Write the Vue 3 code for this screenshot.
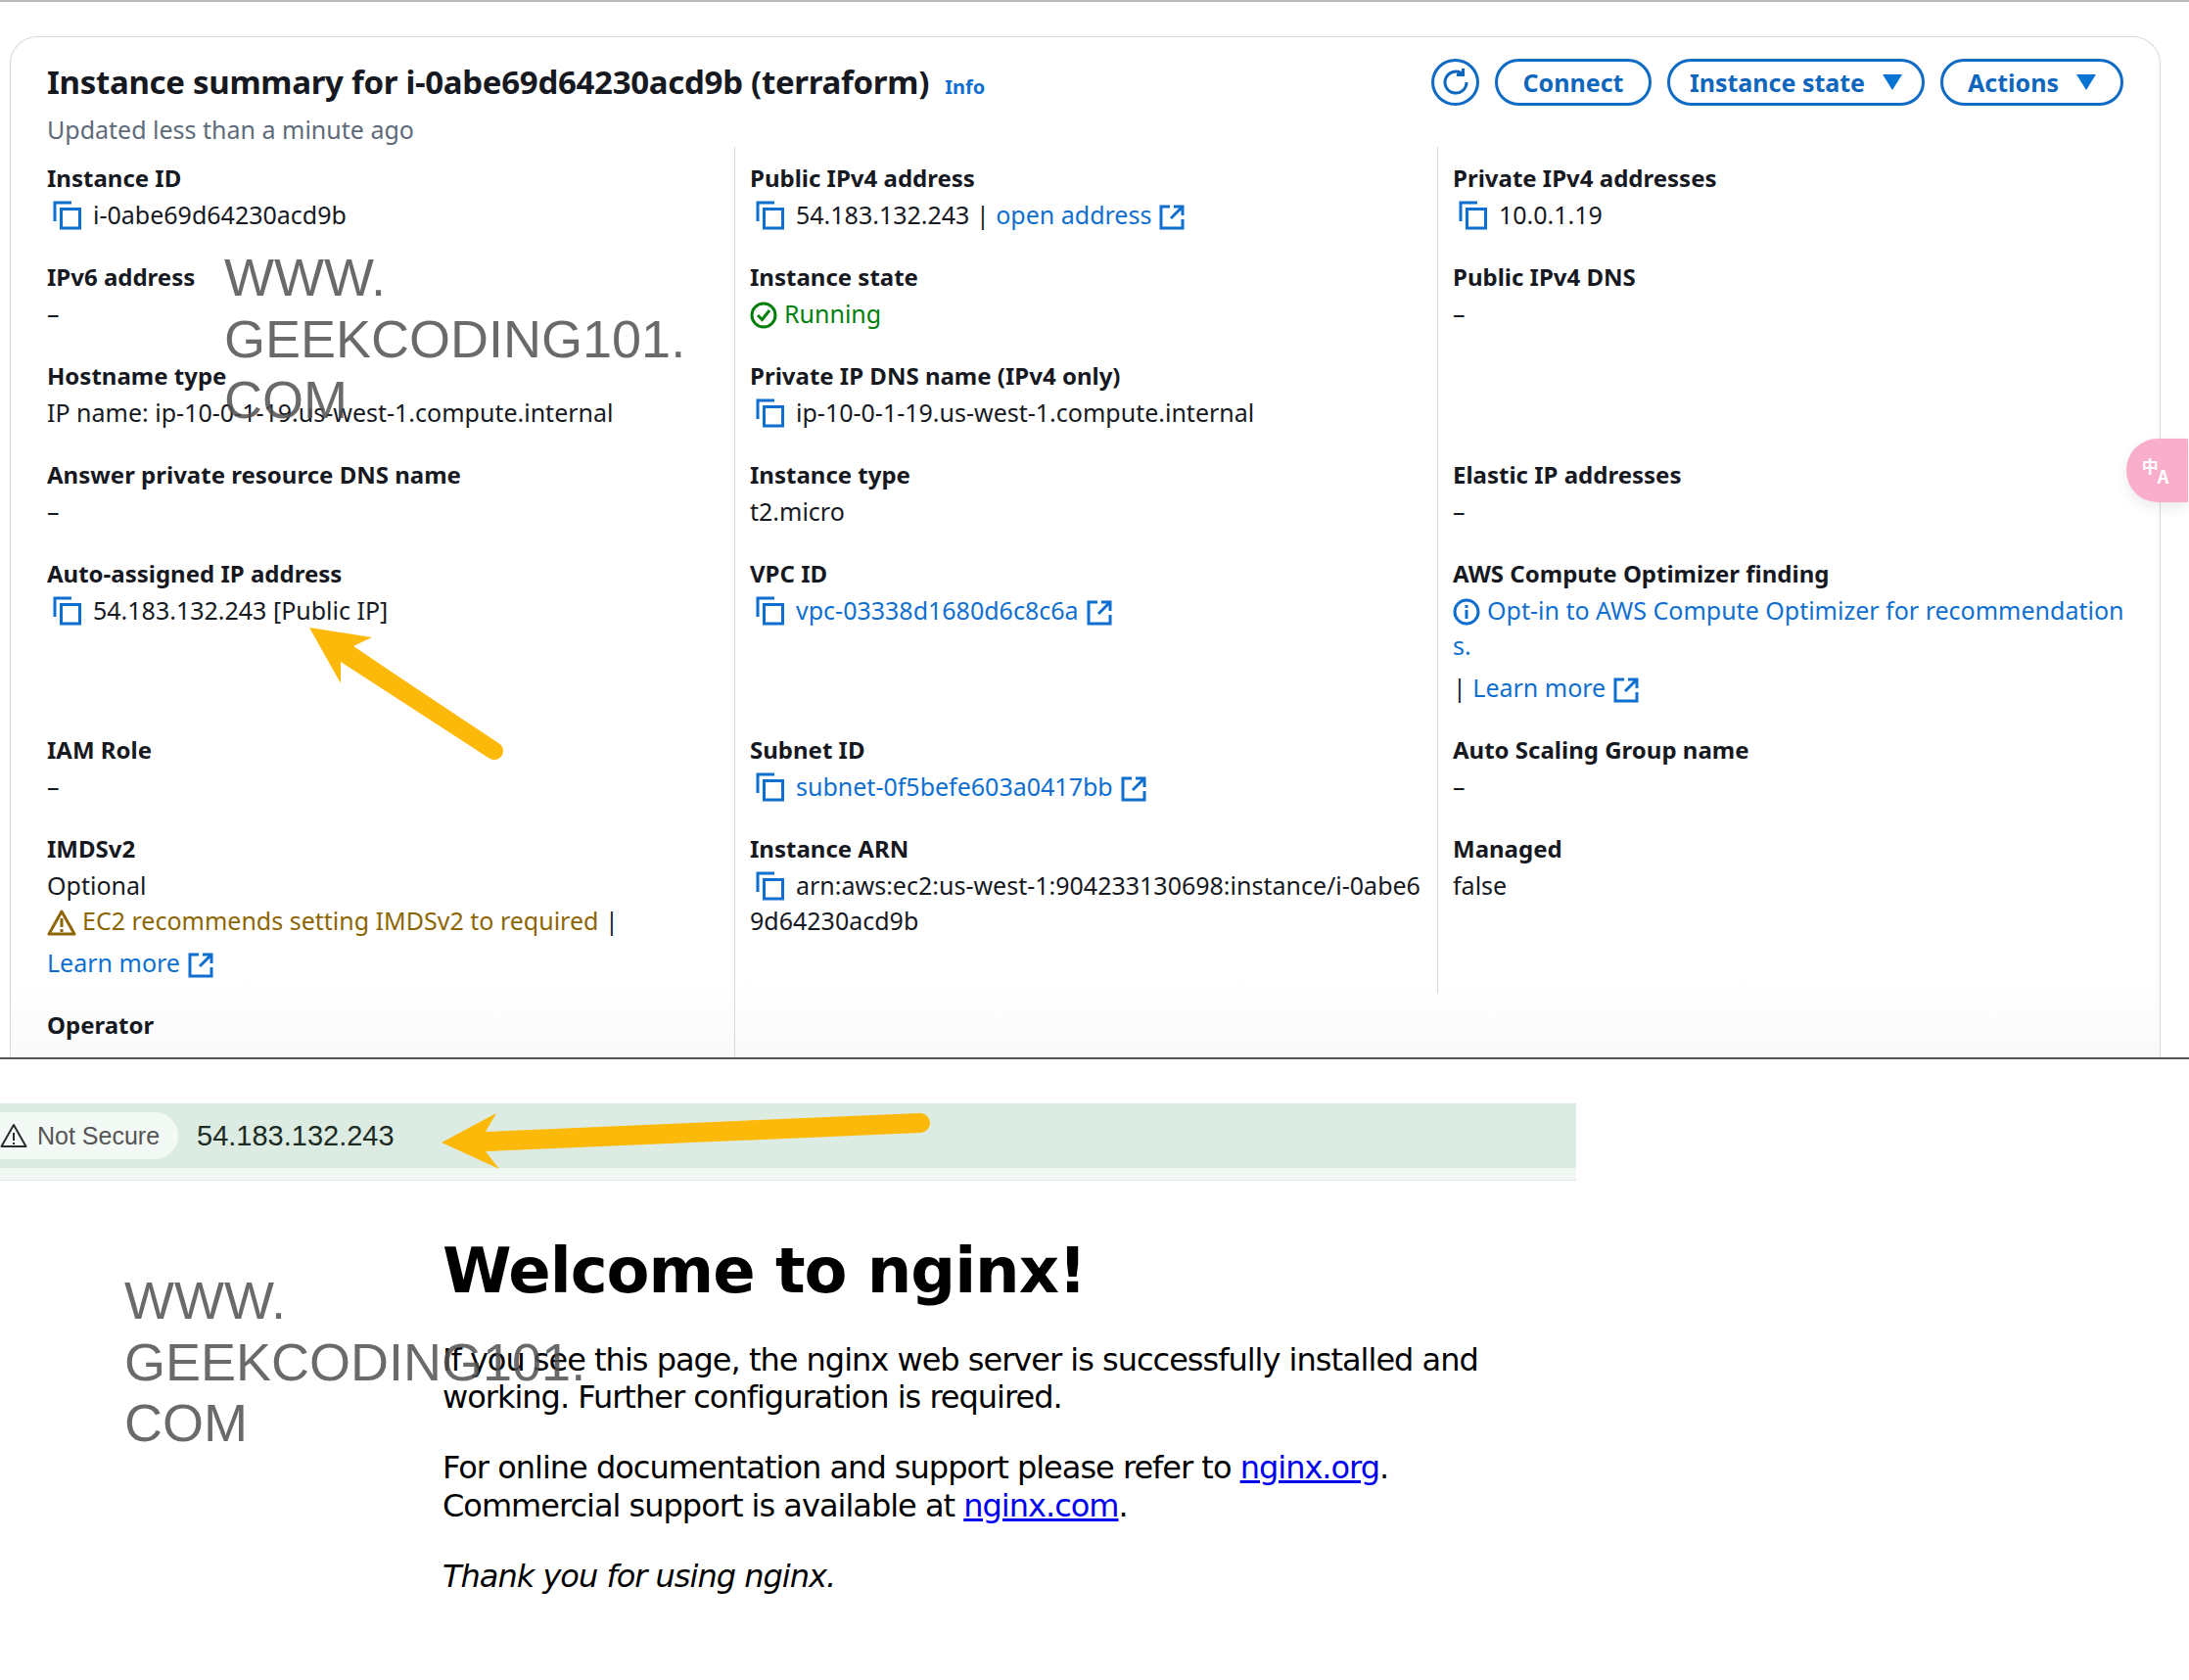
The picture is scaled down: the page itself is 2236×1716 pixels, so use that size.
<template>
  <div class="page">
    <div class="top-line"></div>

    <section class="card">
      <header class="head">
        <div>
          <h1 class="title">Instance summary for i-0abe69d64230acd9b (terraform) <a class="info">Info</a></h1>
          <p class="updated">Updated less than a minute ago</p>
        </div>
        <div class="actions">
          <button class="btn round" aria-label="Refresh">
            <svg width="30" height="30" viewBox="0 0 30 30" fill="none" stroke="currentColor" stroke-width="3">
              <path d="M21.5 6.2A11 11 0 1 0 26 15" />
              <path d="M22.5 1v6.5H16" />
            </svg>
          </button>
          <button class="btn connect">Connect</button>
          <button class="btn state">Instance state <i class="caret"></i></button>
          <button class="btn acts">Actions <i class="caret"></i></button>
        </div>
      </header>

      <div class="grid">
        <div v-for="(cell, i) in cells" :key="i" class="cell" :class="{ first: i % 3 === 0 }">
          <template v-if="cell">
            <div class="label">{{ cell.label }}</div>
            <div v-for="(line, j) in cell.lines" :key="j" class="line" :class="line.cls">
              <template v-for="(seg, k) in line.segs" :key="k">
                <svg v-if="seg.icon === 'copy'" class="ico copy" width="30" height="30" viewBox="0 0 30 30" fill="none" stroke="#0f6fd0" stroke-width="3">
                  <path d="M2 21V2h17" />
                  <rect x="8.5" y="8.5" width="19" height="19.5" />
                </svg>
                <svg v-else-if="seg.icon === 'ext'" class="ico ext" width="26" height="26" viewBox="0 0 26 26" fill="none" stroke="#0f6fd0" stroke-width="3">
                  <path d="M11 2H2v22h22v-9" />
                  <path d="M24 11V2h-9M24 2L12 14" />
                </svg>
                <svg v-else-if="seg.icon === 'ok'" class="ico ok" width="28" height="28" viewBox="0 0 28 28" fill="none" stroke="#037f0c" stroke-width="3">
                  <circle cx="14" cy="14" r="12" />
                  <path d="M8 14l4.500 4.500L20 9" />
                </svg>
                <svg v-else-if="seg.icon === 'warn'" class="ico warn" width="30" height="28" viewBox="0 0 30 28" fill="none" stroke="#8d6605" stroke-width="3">
                  <path d="M15 3L2 26h26z" stroke-linejoin="round" />
                  <path d="M15 10v9M15 21v3" />
                </svg>
                <svg v-else-if="seg.icon === 'info'" class="ico inf" width="28" height="28" viewBox="0 0 28 28" fill="none" stroke="#0f6fd0" stroke-width="3">
                  <circle cx="14" cy="14" r="12" />
                  <path d="M14 12v9M14 7v3" />
                </svg>
                <a v-else-if="seg.link" class="link">{{ seg.text }}</a>
                <span v-else :class="seg.cls">{{ seg.text }}</span>
              </template>
            </div>
          </template>
        </div>
      </div>

      <div class="pink">
        <span class="zh">中</span><span class="en">A</span>
      </div>
    </section>

    <section class="browser">
      <div class="bar">
        <div class="pill">
          <svg width="28" height="28" viewBox="0 0 28 28" fill="none" stroke="#2b2b2b" stroke-width="2">
            <path d="M14 3L1.500 25h25z" stroke-linejoin="round" />
            <path d="M14 11v8M14 21v2" />
          </svg>
          <span>Not Secure</span>
        </div>
        <span class="addr">54.183.132.243</span>
      </div>
      <div class="bar-foot"></div>

      <div class="nginx">
        <h2>Welcome to nginx!</h2>
        <p>If you see this page, the nginx web server is successfully installed and<br />working. Further configuration is required.</p>
        <p>For online documentation and support please refer to <a>nginx.org</a>.<br />Commercial support is available at <a>nginx.com</a>.</p>
        <p><em>Thank you for using nginx.</em></p>
      </div>
    </section>

    <div class="mark mark-a">WWW.<br />GEEKCODING101.<br />COM</div>
    <div class="mark mark-b">WWW.<br />GEEKCODING101.<br />COM</div>

    <svg class="arrow arrow-a" width="240" height="160" viewBox="0 0 240 160">
      <polygon points="6,1 70,11 51,20 201,122 189,134 38,36 38,58" fill="#fdb90a" />
      <line x1="40" y1="24" x2="195" y2="127" stroke="#fdb90a" stroke-width="18" stroke-linecap="round" />
    </svg>
    <svg class="arrow arrow-b" width="520" height="70" viewBox="0 0 520 70">
      <polygon points="1,37 57,7 46,26 46,46 60,64" fill="#fdb90a" />
      <line x1="46" y1="36" x2="490" y2="17" stroke="#fdb90a" stroke-width="20" stroke-linecap="round" />
    </svg>
  </div>
</template>

<script setup>
const txt = (text, cls) => ({ text, cls })
const link = (text) => ({ text, link: true })
const copy = { icon: 'copy' }
const ext = { icon: 'ext' }
const dash = { segs: [txt('–')] }

// cells run left to right, three per row; null leaves a column empty
const cells = [
  { label: 'Instance ID', lines: [{ segs: [copy, txt('i-0abe69d64230acd9b')] }] },
  { label: 'Public IPv4 address', lines: [{ segs: [copy, txt('54.183.132.243 | '), link('open address'), ext] }] },
  { label: 'Private IPv4 addresses', lines: [{ segs: [copy, txt('10.0.1.19')] }] },

  { label: 'IPv6 address', lines: [dash] },
  { label: 'Instance state', lines: [{ segs: [{ icon: 'ok' }, txt('Running', 'green')] }] },
  { label: 'Public IPv4 DNS', lines: [dash] },

  { label: 'Hostname type', lines: [{ segs: [txt('IP name: ip-10-0-1-19.us-west-1.compute.internal')] }] },
  { label: 'Private IP DNS name (IPv4 only)', lines: [{ segs: [copy, txt('ip-10-0-1-19.us-west-1.compute.internal')] }] },
  {},

  { label: 'Answer private resource DNS name', lines: [dash] },
  { label: 'Instance type', lines: [{ segs: [txt('t2.micro')] }] },
  { label: 'Elastic IP addresses', lines: [dash] },

  { label: 'Auto-assigned IP address', lines: [{ segs: [copy, txt('54.183.132.243 [Public IP]')] }] },
  { label: 'VPC ID', lines: [{ segs: [copy, link('vpc-03338d1680d6c8c6a'), ext] }] },
  {
    label: 'AWS Compute Optimizer finding',
    lines: [
      { segs: [{ icon: 'info' }, link('Opt-in to AWS Compute Optimizer for recommendation')] },
      { segs: [link('s.')] },
      { segs: [txt('| '), link('Learn more'), ext], cls: 'spaced' },
    ],
  },

  { label: 'IAM Role', lines: [dash] },
  { label: 'Subnet ID', lines: [{ segs: [copy, link('subnet-0f5befe603a0417bb'), ext] }] },
  { label: 'Auto Scaling Group name', lines: [dash] },

  {
    label: 'IMDSv2',
    lines: [
      { segs: [txt('Optional')] },
      { segs: [{ icon: 'warn' }, txt('EC2 recommends setting IMDSv2 to required', 'amber'), txt(' |')] },
      { segs: [link('Learn more'), ext], cls: 'spaced' },
    ],
  },
  {
    label: 'Instance ARN',
    lines: [
      { segs: [copy, txt('arn:aws:ec2:us-west-1:904233130698:instance/i-0abe6')] },
      { segs: [txt('9d64230acd9b')] },
    ],
  },
  { label: 'Managed', lines: [{ segs: [txt('false')] }] },

  { label: 'Operator', lines: [] },
  {},
]
</script>

<style>
html,
body {
  margin: 0;
  background: #fff;
}
</style>

<style scoped>
.page {
  position: relative;
  width: 2236px;
  height: 1716px;
  overflow: hidden;
  font-family: "Noto Sans", "Open Sans", sans-serif;
  color: #16191f;
}

.top-line {
  height: 2px;
  background: #bbb;
}

.card {
  position: relative;
  height: 1043px;
  margin: 35px 29px 0 10px;
  border: 1px solid #d5d9de;
  border-bottom: 0;
  border-radius: 28px 28px 0 0;
  padding: 0 0 0 37px;
  box-sizing: border-box;
  background: linear-gradient(#fff 960px, #fafafa);
}

.head {
  display: flex;
  justify-content: space-between;
  align-items: flex-start;
  padding: 22px 37px 0 0;
  height: 112px;
  box-sizing: border-box;
}

.title {
  margin: 0;
  font-size: 33px;
  line-height: 48px;
  font-weight: 700;
  letter-spacing: -0.3px;
}

.info {
  margin-left: 8px;
  font-size: 20px;
  font-weight: 700;
  letter-spacing: 0;
  color: #0f6fd0;
}

.updated {
  margin: 0;
  font-size: 25px;
  line-height: 38px;
  color: #5f6b7a;
}

.actions {
  display: flex;
  gap: 16px;
  align-items: center;
}

.btn {
  height: 48px;
  box-sizing: border-box;
  border: 3px solid #0f6bc4;
  border-radius: 24px;
  background: #fff;
  color: #0f66bd;
  font: 700 25px "Noto Sans", sans-serif;
  padding: 0;
  display: flex;
  align-items: center;
  justify-content: center;
}

.round {
  width: 49px;
  border-radius: 50%;
}

.connect {
  width: 160px;
}

.state {
  width: 263px;
  gap: 18px;
}

.acts {
  width: 187px;
  gap: 18px;
}

.caret {
  width: 0;
  height: 0;
  border-left: 10px solid transparent;
  border-right: 10px solid transparent;
  border-top: 16px solid #0972d3;
}

.grid {
  display: grid;
  grid-template-columns: 702px 718px 680px;
  margin-top: 0;
}

.cell {
  padding: 14px 0 14px 15px;
  border-left: 1px solid #d5d9de;
  min-width: 0;
}

.cell.first {
  padding-left: 0;
  border-left: 0;
}

.label {
  font-size: 24px;
  line-height: 36.5px;
  font-weight: 700;
  white-space: nowrap;
}

.line {
  font-size: 25px;
  line-height: 36.5px;
  white-space: nowrap;
}

.line.spaced {
  margin-top: 6px;
}

.link {
  color: #0f6fd0;
}

.green {
  color: #037f0c;
}

.amber {
  color: #8d6605;
}

.ico {
  vertical-align: -6px;
}

.copy {
  margin: 0 11px 0 6px;
}

.ext {
  margin-left: 8px;
}

.ok,
.inf {
  margin-right: 7px;
}

.warn {
  margin-right: 6px;
}

.pink {
  position: absolute;
  top: 410px;
  right: -29px;
  width: 63px;
  height: 65px;
  border-radius: 32px 0 0 32px;
  background: #f9aecb;
  box-shadow: 0 6px 14px rgba(0, 0, 0, 0.08);
  color: #fff;
  display: flex;
  align-items: center;
  justify-content: center;
  font-family: "Noto Sans CJK SC", sans-serif;
  font-weight: 700;
}

.zh {
  font-size: 17px;
  margin: -10px 0 0 -4px;
}

.en {
  font-size: 18px;
  margin: 10px 0 0 -1px;
}

.browser {
  border-top: 2px solid #555;
  padding-top: 45px;
}

.bar {
  width: 1610px;
  height: 66px;
  background: #ddece3;
  display: flex;
  align-items: center;
  font-family: "Liberation Sans", Arial, sans-serif;
}

.pill {
  width: 182px;
  height: 48px;
  border-radius: 0 24px 24px 0;
  background: #f3f9f5;
  display: flex;
  align-items: center;
  gap: 10px;
  font-size: 25px;
  color: #555;
  box-sizing: border-box;
}

.addr {
  margin-left: 19px;
  font-size: 29px;
  color: #1c2b24;
}

.bar-foot {
  width: 1610px;
  height: 12px;
  background: #f1f8f3;
  border-bottom: 1px solid #dfe9e3;
}

.nginx {
  margin: 0 0 0 452px;
  font-family: "DejaVu Sans", sans-serif;
  font-size: 32px;
  line-height: 38.5px;
  color: #000;
  letter-spacing: -1px;
}

.nginx h2 {
  margin: 54px 0 0;
  font-size: 64px;
  line-height: 76px;
  font-weight: 700;
}

.nginx p {
  margin: 33.500px 0 0;
}

.nginx a {
  color: #0000ee;
  text-decoration: underline;
}

.mark {
  position: absolute;
  font-family: "Liberation Sans", Arial, sans-serif;
  font-size: 54px;
  line-height: 62.500px;
  color: rgba(80, 80, 80, 0.85);
  white-space: nowrap;
}

.mark-a {
  left: 229px;
  top: 252px;
}

.mark-b {
  left: 127px;
  top: 1297px;
}

.arrow {
  position: absolute;
}

.arrow-a {
  left: 310px;
  top: 640px;
}

.arrow-b {
  left: 450px;
  top: 1130px;
}
</style>
